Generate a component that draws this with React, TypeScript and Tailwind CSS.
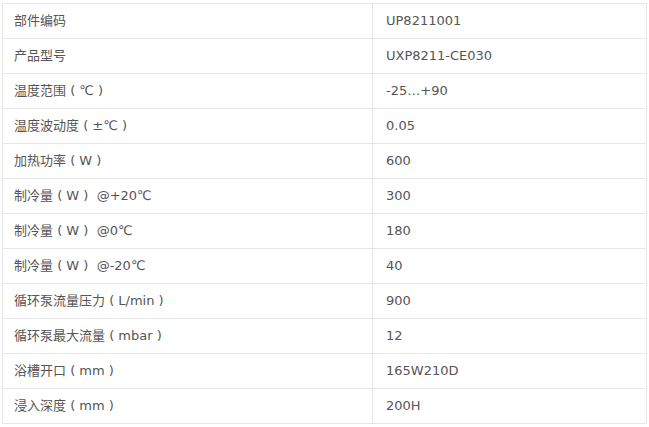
import React from "react";

const rows: [string, string][] = [
  ["部件编码", "UP8211001"],
  ["产品型号", "UXP8211-CE030"],
  ["温度范围 ( ℃ )", "-25…+90"],
  ["温度波动度 ( ±℃ )", "0.05"],
  ["加热功率 ( W )", "600"],
  ["制冷量 ( W )  @+20℃", "300"],
  ["制冷量 ( W )  @0℃", "180"],
  ["制冷量 ( W )  @-20℃", "40"],
  ["循环泵流量压力 ( L/min )", "900"],
  ["循环泵最大流量 ( mbar )", "12"],
  ["浴槽开口 ( mm )", "165W210D"],
  ["浸入深度 ( mm )", "200H"],
];

export default function App() {
  return (
    <div
      className="w-[649px] h-[427px] bg-white pt-[3px] pl-[2px]"
      style={{ fontFamily: '"DejaVu Sans", "Noto Sans CJK SC", sans-serif' }}
    >
      <table className="w-[645px] border-collapse text-[13px] text-[#555]">
        <tbody>
          {rows.map(([k, v], i) => (
            <tr key={i} className="h-[35px]">
              <td className="w-[370px] border border-[#e6e6e6] pl-[11px] align-middle whitespace-pre">{k}</td>
              <td className="border border-[#e6e6e6] pl-[13px] align-middle">{v}</td>
            </tr>
          ))}
        </tbody>
      </table>
    </div>
  );
}
